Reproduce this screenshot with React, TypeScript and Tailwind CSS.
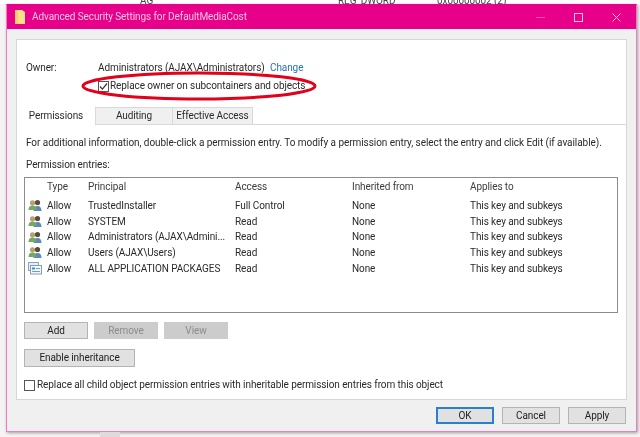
const rows = [
  { principal: 'TrustedInstaller', access: 'Full Control', app: false },
  { principal: 'SYSTEM', access: 'Read', app: false },
  { principal: 'Administrators (AJAX\\Admini...', access: 'Read', app: false },
  { principal: 'Users (AJAX\\Users)', access: 'Read', app: false },
  { principal: 'ALL APPLICATION PACKAGES', access: 'Read', app: true },
];

function UsersIcon() {
  return (
    <svg width="14" height="13" viewBox="0 0 14 13">
      <circle cx="9.5" cy="3.5" r="2.6" fill="#5a4a38" />
      <path d="M5.5 12c0-3.5 1.5-5 4-5s4 1.5 4 5z" fill="#5c88bd" />
      <circle cx="4.5" cy="3.8" r="2.6" fill="#b8a070" />
      <path d="M0.5 11c0-3.2 1.6-4.6 4-4.6s4 1.4 4 4.6z" fill="#74a860" />
    </svg>
  );
}

function AppIcon() {
  return (
    <svg width="14" height="13" viewBox="0 0 14 13">
      <rect x="0.5" y="0.5" width="10" height="8" fill="#e4eef8" stroke="#8aa4c0" />
      <rect x="2.5" y="3.5" width="11" height="8.5" fill="#f4f8fc" stroke="#8a9cb0" />
      <rect x="4" y="5.5" width="3" height="2" fill="#3a90d8" />
      <rect x="8" y="6" width="4" height="1" fill="#70a0d0" />
      <rect x="4" y="9" width="8" height="1" fill="#70a0d0" />
    </svg>
  );
}

function Button({ label, disabled, wide, focus }: { label: string; disabled?: boolean; wide?: boolean; focus?: boolean }) {
  return (
    <div
      className={`flex items-center justify-center ${wide ? 'h-[18px] w-[111px]' : 'h-[17px]'} ${focus ? 'w-[58px] border-2 border-[#2a7fd0]' : 'border'} ${
        disabled ? 'border-[#cccccc] bg-[#cccccc] text-[#8c8c8c]' : 'bg-[#e1e1e1] text-[#222222]'
      } ${!disabled && !focus ? 'border-[#b4b4b4]' : ''}`}
    >
      {label}
    </div>
  );
}

export default function App() {
  return (
    <div className="relative h-[437px] w-[640px] overflow-hidden bg-[#f4f4f4] font-['Roboto',sans-serif] text-[10px] leading-[14px] tracking-[-0.09px] text-[#2a2a2a] blur-[0.5px]">
      <div className="flex h-[4px] overflow-hidden bg-white text-[#444444]">
        <span className="ml-[140px] mt-[-6px] w-[198px]">AG</span>
        <span className="mt-[-6px] w-[99px]">REG_DWORD</span>
        <span className="mt-[-6px]">0x00000002 (2)</span>
      </div>

      <div className="ml-[6px] flex h-[428px] w-[631px] flex-col border border-[#ee7cc0] border-t-[#e6008a] bg-[#f0f0f0] shadow-[1px_1px_3px_rgba(0,0,0,0.35)]">
        <div className="flex h-[24px] shrink-0 items-center bg-[#e6008a] pl-[8px]">
          <svg width="11" height="14" viewBox="0 0 11 14">
            <path d="M0 0h7l3 2v12H0z" fill="#fbe08a" />
            <path d="M0 0h3v14H0z" fill="#f4d070" />
          </svg>
          <span className="ml-[6px] text-[#f8c4e2]">Advanced Security Settings for DefaultMediaCost</span>
          <div className="ml-auto flex items-center">
            <div className="mr-[29px] h-px w-[9px] bg-[#ee50ab]" />
            <div className="mr-[29px] h-[9px] w-[9px] border border-[#f8c4e2]" />
            <svg className="mr-[15px]" width="9" height="9" viewBox="0 0 9 9">
              <path d="M0.5 0.5l8 8M8.5 0.5l-8 8" stroke="#f8c4e2" strokeWidth="1" />
            </svg>
          </div>
        </div>

        <div className="mx-[9px] mt-[10px] flex h-[361px] w-[611px] flex-col border border-[#d6d6d6] bg-white">
          <div className="mt-[21px] flex h-[14px] items-center pl-[9px]">
            <span className="w-[72px]">Owner:</span>
            <span className="w-[172px]">Administrators (AJAX\Administrators)</span>
            <span className="text-[#2a70c0]">Change</span>
          </div>
          <div className="mt-[4px] flex h-[14px] items-center pl-[81px]">
            <div className="flex h-[11px] w-[11px] items-center justify-center border border-[#555555] bg-white">
              <svg width="9" height="9" viewBox="0 0 9 9">
                <path d="M1 4.5l2.4 2.6L8 1.5" fill="none" stroke="#333333" strokeWidth="1.2" />
              </svg>
            </div>
            <span className="ml-[1px]">Replace owner on subcontainers and objects</span>
          </div>

          <div className="mt-[14px] flex h-[18px] border-b border-[#d9d9d9]">
            <div className="z-10 flex h-[18px] w-[78px] items-center justify-center bg-white">Permissions</div>
            <div className="flex h-[17px] w-[78px] items-center justify-center border-x border-t border-[#d9d9d9] bg-[#f0f0f0]">Auditing</div>
            <div className="flex h-[17px] w-[80px] items-center justify-center border-r border-t border-[#d9d9d9] bg-[#f0f0f0]">Effective Access</div>
          </div>

          <div className="mt-[11px] pl-[9px] tracking-[-0.06px]">
            For additional information, double-click a permission entry. To modify a permission entry, select the entry and click Edit (if available).
          </div>
          <div className="mt-[8px] pl-[9px]">Permission entries:</div>

          <div className="ml-[7px] mt-[5px] h-[136px] w-[594px] border border-[#8c8c8c] bg-white">
            <div className="grid h-[18px] grid-cols-[22px_41px_147px_117px_118px_1fr] items-center text-[#3c3c3c]">
              <span />
              <span>Type</span>
              <span>Principal</span>
              <span>Access</span>
              <span>Inherited from</span>
              <span>Applies to</span>
            </div>
            <div className="mt-[2px] flex flex-col">
              {rows.map((row) => (
                <div key={row.principal} className="grid h-[15.7px] grid-cols-[22px_41px_147px_117px_118px_1fr] items-center">
                  <span className="flex pl-[3px]">{row.app ? <AppIcon /> : <UsersIcon />}</span>
                  <span>Allow</span>
                  <span>{row.principal}</span>
                  <span>{row.access}</span>
                  <span>None</span>
                  <span>This key and subkeys</span>
                </div>
              ))}
            </div>
          </div>

          <div className="ml-[7px] mt-[9px] flex gap-[6px] [&>div]:w-[64px]">
            <Button label="Add" />
            <Button label="Remove" disabled />
            <Button label="View" disabled />
          </div>
          <div className="ml-[7px] mt-[10px]">
            <Button label="Enable inheritance" wide />
          </div>
          <div className="ml-[7px] mt-[11px] flex h-[14px] items-center">
            <div className="h-[11px] w-[11px] border border-[#555555] bg-white" />
            <span className="ml-[2px]">Replace all child object permission entries with inheritable permission entries from this object</span>
          </div>
        </div>

        <div className="mr-[10px] mt-[7px] flex justify-end gap-[8px] [&>div]:w-[58px]">
          <Button label="OK" focus />
          <Button label="Cancel" />
          <Button label="Apply" />
        </div>
      </div>

      <div className="ml-[100px] h-[5px] w-[20px] bg-[#dcdcdc]" />

      <svg className="absolute left-[80px] top-[70px]" width="240" height="32" viewBox="0 0 240 32">
        <ellipse cx="119" cy="16" rx="116" ry="13" fill="none" stroke="#e2001a" strokeWidth="3" />
      </svg>
    </div>
  );
}
